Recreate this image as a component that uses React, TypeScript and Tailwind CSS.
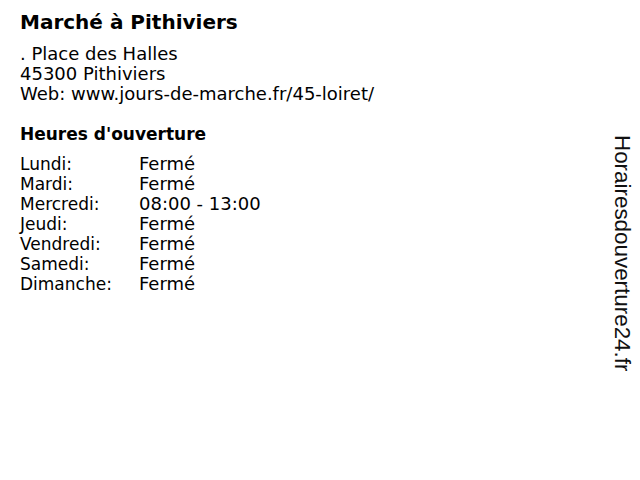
const hours = [
  { day: 'Lundi:', time: 'Fermé' },
  { day: 'Mardi:', time: 'Fermé' },
  { day: 'Mercredi:', time: '08:00 - 13:00' },
  { day: 'Jeudi:', time: 'Fermé' },
  { day: 'Vendredi:', time: 'Fermé' },
  { day: 'Samedi:', time: 'Fermé' },
  { day: 'Dimanche:', time: 'Fermé' },
]

export default function App() {
  return (
    <div className="flex h-[480px] w-[640px] bg-white font-['DejaVu_Sans',sans-serif] text-black">
      <main className="flex-1 pl-5 pt-[10px]">
        <h1 className="text-[20px] font-bold leading-6">Marché à Pithiviers</h1>
        <p className="mt-[10px] text-[18px] leading-5">
          . Place des Halles
          <br />
          45300 Pithiviers
          <br />
          Web: www.jours-de-marche.fr/45-loiret/
        </p>
        <h2 className="mt-[20px] text-[17px] font-bold leading-5">Heures d'ouverture</h2>
        <table className="mt-[10px] border-collapse leading-5">
          <tbody>
            {hours.map((row) => (
              <tr key={row.day}>
                <td className="w-[119px] p-0 text-[17px]">{row.day}</td>
                <td className="p-0 text-[18px]">{row.time}</td>
              </tr>
            ))}
          </tbody>
        </table>
      </main>
      <aside className="w-[30px] pt-[135px]">
        <span className="font-['Liberation_Sans',sans-serif] text-[22.4px] leading-6 text-[#111] [writing-mode:vertical-rl]">
          Horairesdouverture24.fr
        </span>
      </aside>
    </div>
  )
}
